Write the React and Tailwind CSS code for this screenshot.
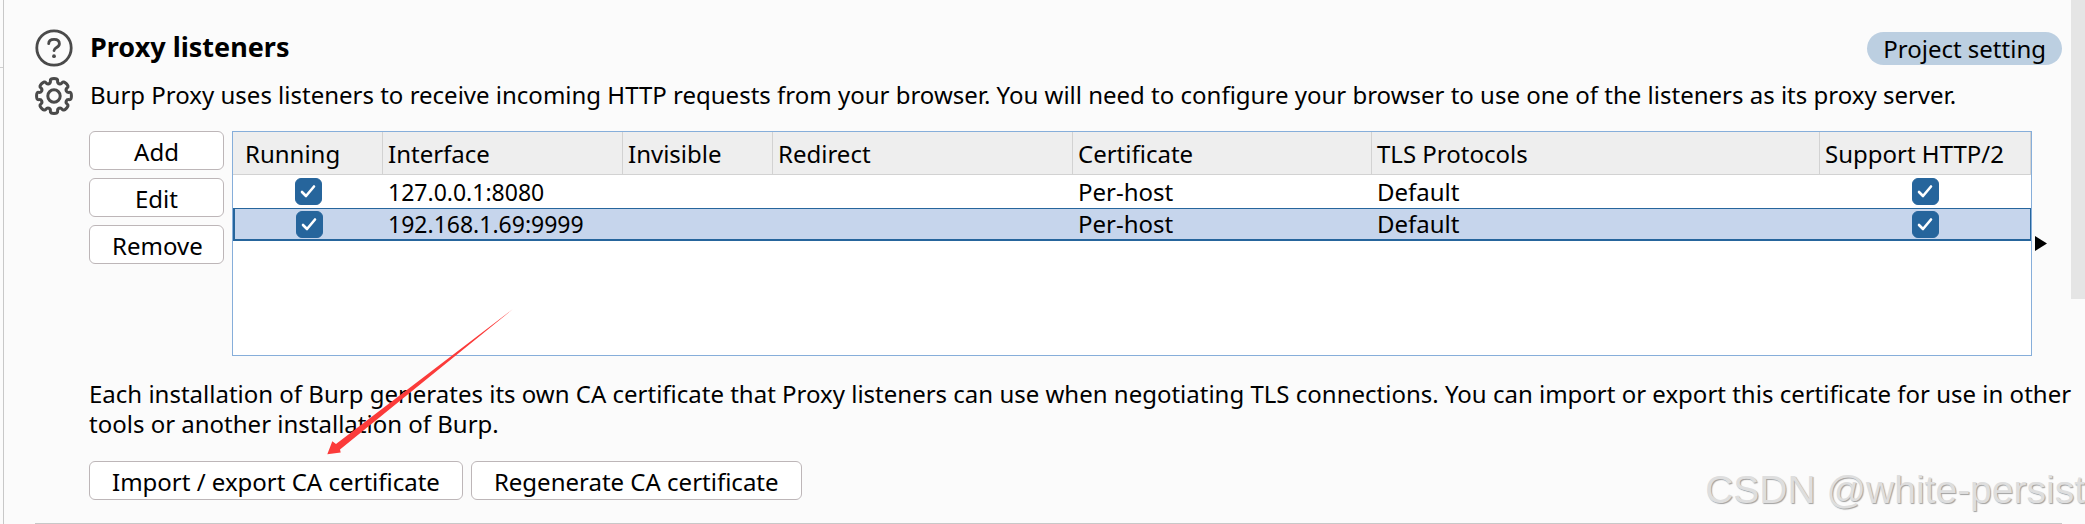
import { useState } from "react";
import clsx from "clsx";

const LISTENERS = [
  { id: 1, running: true, iface: "127.0.0.1:8080", cert: "Per-host", tls: "Default", http2: true },
  { id: 2, running: true, iface: "192.168.1.69:9999", cert: "Per-host", tls: "Default", http2: true },
];

const COLUMNS = [
  { label: "Running", width: "w-[150px]" },
  { label: "Interface", width: "w-[240px]" },
  { label: "Invisible", width: "w-[150px]" },
  { label: "Redirect", width: "w-[300px]" },
  { label: "Certificate", width: "w-[299px]" },
  { label: "TLS Protocols", width: "w-auto" },
  { label: "Support HTTP/2", width: "w-[211px]" },
];

export default function App() {
  const [rows, setRows] = useState(LISTENERS);
  const [selected, setSelected] = useState(2);

  const toggle = (id, key) =>
    setRows((prev) => prev.map((r) => (r.id === id ? { ...r, [key]: !r[key] } : r)));

  return (
    <div className="relative flex min-h-screen overflow-hidden bg-[#fbfbfb] font-['Noto_Sans','Open_Sans',sans-serif] text-[24px] leading-[30px] text-black">
      <div className="w-[3px] shrink-0 pt-[67px]">
        <div className="border-t border-[#cfcfcf]" />
      </div>

      <main className="min-w-0 flex-1 border-l border-[#c8c8c8] pt-[29px] pr-[9px] pl-[31px]">
        <section className="border-b border-[#c8c8c8] pb-[23px]">
          <div className="flex items-center gap-[17px]">
            <button aria-label="Help" className="shrink-0"><HelpIcon /></button>
            <h2 className="flex-1 pb-[2px] text-[27px] font-bold">Proxy listeners</h2>
            <span className="rounded-full bg-[#bccfe1] px-4 pt-[2px] pb-px">Project setting</span>
          </div>

          <div className="mt-[10px] flex items-center gap-[17px]">
            <button aria-label="Settings" className="shrink-0"><GearIcon /></button>
            <p className="pb-[2px]">
              Burp Proxy uses listeners to receive incoming HTTP requests from your browser. You will need to configure
              your browser to use one of the listeners as its proxy server.
            </p>
          </div>

          <div className="mt-4 flex gap-2 pr-[15px] pl-[54px]">
            <div className="flex w-[135px] shrink-0 flex-col gap-2">
              <Button>Add</Button>
              <Button>Edit</Button>
              <Button>Remove</Button>
            </div>
            <div className="flex min-w-0 flex-1 items-center gap-[3px]">
              <div className="min-h-[225px] min-w-0 flex-1 border border-[#86aeda] bg-white">
                <table className="w-full table-fixed border-separate border-spacing-0 text-left whitespace-nowrap">
                  <thead>
                    <tr className="h-[43px] bg-[#eeeeee]">
                      {COLUMNS.map((c, i) => (
                        <th
                          key={c.label}
                          className={clsx(
                            "border-r border-b border-[#d2d2d2] p-0 pt-[2px] font-normal",
                            i === 0 ? "pl-3" : "pl-[5px]",
                            c.width
                          )}
                        >
                          {c.label}
                        </th>
                      ))}
                    </tr>
                  </thead>
                  <tbody>
                    {rows.map((r) => (
                      <ListenerRow
                        key={r.id}
                        row={r}
                        active={r.id === selected}
                        onSelect={() => setSelected(r.id)}
                        onToggle={(key) => toggle(r.id, key)}
                      />
                    ))}
                  </tbody>
                </table>
              </div>
              <svg width="12" height="15" viewBox="0 0 12 15" className="shrink-0" aria-hidden="true">
                <path d="M0 0 12 7.5 0 15Z" />
              </svg>
            </div>
          </div>

          <div className="mt-[23px] pl-[54px]">
            <p className="-mr-3">
              Each installation of Burp generates its own CA certificate that Proxy listeners can use when negotiating
              TLS connections. You can import or export this certificate for use in other tools or another installation
              of Burp.
            </p>
            <div className="mt-[22px] flex gap-2">
              <Button>Import / export CA certificate</Button>
              <Button>Regenerate CA certificate</Button>
            </div>
          </div>
        </section>
      </main>

      <div className="w-[14px] shrink-0">
        <div className="h-[299px] bg-[#e5e5e5]" />
      </div>

      {/* pointer to the import / export button */}
      <svg
        width="190"
        height="150"
        viewBox="0 0 190 150"
        className="pointer-events-none absolute top-[308px] left-[325px]"
        aria-hidden="true"
      >
        <path d="M188 1 11 136 7.300 133.300 2.300 146.300 15.700 144.500 15 141.500Z" fill="#fb3b3a" />
      </svg>

      <div className="pointer-events-none absolute right-0 bottom-0 font-['Liberation_Sans',sans-serif] text-[39px] leading-[68px] whitespace-nowrap text-[#dedede] [text-shadow:1px_1px_1px_#a0a0a0]">
        CSDN @white-persist
      </div>
    </div>
  );
}

function ListenerRow({ row, active, onSelect, onToggle }) {
  const cell = clsx("p-0 pl-[5px]", active && "border-t border-b-2 border-[#26659c]");
  return (
    <tr onClick={onSelect} className={clsx("h-[33px]", active && "bg-[#c6d5ec]")}>
      <td className={clsx("p-0", active && "border-t border-b-2 border-l-2 border-[#26659c]")}>
        <Checkbox label={`${row.iface} running`} checked={row.running} onChange={() => onToggle("running")} />
      </td>
      <td className={clsx(cell, "text-[23px]")}>{row.iface}</td>
      <td className={cell} />
      <td className={cell} />
      <td className={cell}>{row.cert}</td>
      <td className={cell}>{row.tls}</td>
      <td className={clsx("p-0", active && "border-t border-r border-b-2 border-[#26659c]")}>
        <Checkbox label={`${row.iface} HTTP/2`} checked={row.http2} onChange={() => onToggle("http2")} />
      </td>
    </tr>
  );
}

function Checkbox({ label, checked, onChange }) {
  return (
    <label className="mx-auto grid size-[27px] place-items-center">
      <input
        type="checkbox"
        aria-label={label}
        checked={checked}
        onChange={onChange}
        className="peer col-start-1 row-start-1 size-[27px] appearance-none rounded-md border border-[#26659c] bg-white checked:bg-[#26659c]"
      />
      <svg
        viewBox="0 0 27 27"
        className="pointer-events-none invisible col-start-1 row-start-1 size-[27px] peer-checked:visible"
        fill="none"
        stroke="#fff"
        strokeWidth="2.600"
        strokeLinecap="round"
        strokeLinejoin="round"
      >
        <path d="M7 14 11 18 19 8.500" />
      </svg>
    </label>
  );
}

function Button({ children }) {
  return (
    <button className="h-[39px] rounded-md border border-[#bdb6b8] bg-white px-[22px] pt-[2px] whitespace-nowrap">
      {children}
    </button>
  );
}

function HelpIcon() {
  return (
    <svg width="38" height="38" viewBox="0 0 38 38" fill="none" stroke="#4a4a4a" strokeWidth="2.800">
      <circle cx="19" cy="19" r="17.200" />
      <path d="M13.700 14.700c0-2.800 2.300-4.400 5.400-4.400 3.200 0 5.300 1.700 5.300 4.400 0 4-5.200 3.600-5.400 7" strokeLinecap="round" />
      <circle cx="19" cy="27.200" r="1.900" fill="#4a4a4a" stroke="none" />
    </svg>
  );
}

// eight rounded teeth, smoothed through the midpoints of the outline
const GEAR_POINTS = Array.from({ length: 8 }, (_, i) =>
  [[17.9, -13], [17.9, 13], [13.4, 14], [13.4, 31]].map(([r, deg]) => {
    const a = ((i * 45 + deg) * Math.PI) / 180;
    return [19 + r * Math.sin(a), 19 - r * Math.cos(a)];
  })
).flat();

const GEAR_PATH =
  GEAR_POINTS.map(([x, y], i) => {
    const [nx, ny] = GEAR_POINTS[(i + 1) % GEAR_POINTS.length];
    const mid = `${(x + nx) / 2} ${(y + ny) / 2}`;
    return i === 0 ? `M${mid}` : `Q${x} ${y} ${mid}`;
  }).join("") +
  `Q${GEAR_POINTS[0].join(" ")} ${(GEAR_POINTS[0][0] + GEAR_POINTS[1][0]) / 2} ${(GEAR_POINTS[0][1] + GEAR_POINTS[1][1]) / 2}Z`;

function GearIcon() {
  return (
    <svg width="38" height="38" viewBox="0 0 38 38" fill="none" stroke="#4a4a4a" strokeWidth="3" strokeLinejoin="round">
      <path d={GEAR_PATH} />
      <circle cx="19" cy="19" r="6.200" />
    </svg>
  );
}
